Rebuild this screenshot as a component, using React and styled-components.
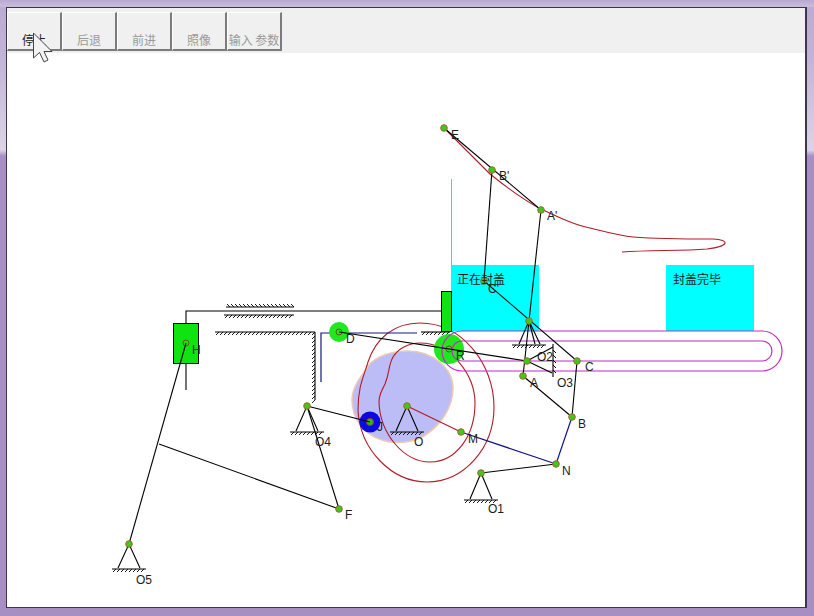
import React from 'react'
import styled, { createGlobalStyle } from 'styled-components'

const Global = createGlobalStyle`
  html, body { margin: 0; padding: 0; background: #a58fc0; }
  #root { width: 814px; height: 616px; overflow: hidden; }
`

const Frame = styled.div`
  position: relative;
  box-sizing: border-box;
  width: 814px;
  height: 616px;
  padding: 7px 7px 8px 6px;
  background: linear-gradient(to bottom, #b9a8d0 0, #c8bcdc 6px, #bcabd2 8px, #c2b4d6 60px, #dcd4e6 150px, #a78fc4 156px, #a78fc4 100%);
`

const Client = styled.div`
  box-sizing: border-box;
  display: flex;
  flex-direction: column;
  width: 100%;
  height: 100%;
  border: 1px solid #3e3650;
  border-right-width: 2px;
  background: #ffffff;
`

const Toolbar = styled.div`
  display: flex;
  flex: none;
  height: 45px;
  padding-top: 4px;
  box-sizing: border-box;
  background: #f0f0f0;
`

const ToolButton = styled.div`
  box-sizing: border-box;
  width: 55px;
  height: 39px;
  padding-bottom: 2px;
  display: flex;
  align-items: flex-end;
  justify-content: center;
  border-right: 2px solid #7b7b7b;
  border-bottom: 2px solid #7b7b7b;
  border-left: 1px solid #ffffff;
  border-top: 1px solid #ffffff;
  font-family: "Noto Sans CJK SC", "Liberation Sans", sans-serif;
  font-size: 12px;
  line-height: 14px;
  white-space: nowrap;
  color: ${props => (props.$active ? '#222222' : '#9a9a9a')};
`

const Canvas = styled.div`
  position: relative;
  flex: 1;
  background: #ffffff;
`

const Drawing = styled.svg`
  position: absolute;
  left: -7px;
  top: -53px;
  width: 814px;
  height: 616px;
`

const Label = styled.text`
  font-family: "Liberation Sans", sans-serif;
  font-size: 12px;
  fill: #1c1c1c;
`

const BoxLabel = styled.text`
  font-family: "Noto Sans CJK SC", "Liberation Sans", sans-serif;
  font-size: 12px;
  fill: #1c1c1c;
`

const Cursor = styled.svg`
  position: absolute;
  left: 32px;
  top: 31px;
  width: 22px;
  height: 33px;
`

const joints = [
  [444, 128], [492, 170], [541, 210], [484, 281], [529, 321], [527, 361],
  [523, 376], [577, 361], [572, 417], [556, 464], [481, 473], [461, 432],
  [407, 406], [307, 406], [339, 509], [129, 544],
]

const labels = [
  ['E', 451, 139], ["B'", 499, 180], ["A'", 547, 220], ['D', 346, 343], ['R', 456, 360],
  ['O2', 537, 361], ['O3', 557, 387], ['A', 530, 387], ['C', 585, 371], ['B', 578, 428],
  ['N', 562, 475], ['M', 468, 443], ['O1', 488, 513], ['O', 414, 446], ['J', 377, 431],
  ['O4', 315, 446], ['F', 345, 519], ['O5', 136, 584], ['H', 192, 354], ["C'", 488, 293],
]

// hatched ground line: a base plus short slanted ticks
const Ground = ({ x1, x2, y, up }) => {
  const ticks = []
  for (let x = x1 + 4; x <= x2; x += 4) {
    ticks.push(<line key={x} x1={x} y1={y} x2={x - 3} y2={y + (up ? -3 : 3)} />)
  }
  return (
    <g stroke="#000" strokeWidth="0.9">
      <line x1={x1} y1={y} x2={x2} y2={y} strokeWidth="1.1" />
      {ticks}
    </g>
  )
}

const Pivot = ({ x, y, drop = 26 }) => (
  <g fill="none" stroke="#000" strokeWidth="1.1">
    <polyline points={`${x - 11},${y + drop - 1} ${x},${y} ${x + 11},${y + drop - 1}`} />
    <Ground x1={x - 17} x2={x + 17} y={y + drop} />
  </g>
)

const VSlide = ({ x, y1, y2 }) => {
  const ticks = []
  for (let y = y1 + 4; y <= y2; y += 4) {
    ticks.push(<line key={y} x1={x} y1={y} x2={x - 3} y2={y + 3} />)
  }
  return (
    <g stroke="#000" strokeWidth="0.9">
      <line x1={x} y1={y1} x2={x} y2={y2} strokeWidth="1.1" />
      {ticks}
    </g>
  )
}

const Mechanism = () => (
  <Drawing viewBox="0 0 814 616">
    {/* boxes on the belt */}
    <rect x="451" y="265" width="88" height="66" fill="#00ffff" />
    <rect x="666" y="265" width="88" height="66" fill="#00ffff" />
    <rect x="451" y="179" width="1" height="86" fill="#20e4e4" />

    {/* cam disc */}
    <path
      d="M408 351 C432 351 453 368 453 388 C453 408 440 426 424 436 C414 442 396 445 382 440 C362 434 352 416 352 400 C352 386 362 376 368 366 C376 356 392 351 408 351 Z"
      fill="#bcbcf6"
      stroke="#ecc9b4"
      strokeWidth="1.5"
    />

    {/* red cam curves */}
    <g fill="none" stroke="#b01c28" strokeWidth="1.1">
      <path d="M420 323 C394 323 376 338 368 362 C364 376 358 386 358 410 C360 450 392 482 427 482 C464 482 494 448 494 407 C494 364 462 323 420 323 Z" />
      <path d="M420 343 C408 343 398 349 393 357 C388 366 390 372 385 384 C381 392 379 396 379 402 C380 434 404 462 430 462 C456 462 475 436 475 403 C475 376 452 343 420 343 Z" />
      <line x1="407" y1="406" x2="461" y2="432" />
      <path d="M444 128 L490 174 C510 190 525 201 541 209 C560 218 575 225 590 228 C610 233 620 236 633 237 C660 239 690 239 713 239 C730 240 730 246 707 249 C680 251 650 250 622 252" />
    </g>

    {/* belt */}
    <g fill="none" stroke="#c02cc0" strokeWidth="1.2">
      <path d="M462 331 H762 A20 20 0 0 1 762 371 H462" />
      <path d="M462 341 H762 A10 10 0 0 1 762 361 H462" />
    </g>

    {/* slider column */}
    <rect x="173.5" y="323.5" width="25" height="40" fill="#10e410" stroke="#000" />
    <rect x="441.5" y="291.5" width="10" height="40" fill="#10e410" stroke="#000" />
    <polyline points="186,323 186,311 441,311" fill="none" stroke="#000" strokeWidth="1.1" />
    <line x1="186" y1="363" x2="186" y2="390" stroke="#000" strokeWidth="1.1" />
    <Ground x1={226} x2={294} y={307} up />
    <Ground x1={224} x2={294} y={315} />

    {/* guides */}
    <Ground x1={215} x2={315} y={332} />
    <VSlide x={315} y1={332} y2={400} />
    <Ground x1={421} x2={450} y={332} />
    <polyline points="321,382 321,333 417,333" fill="none" stroke="#14148c" strokeWidth="1.2" />

    {/* rollers */}
    <circle cx="339" cy="332" r="10" fill="#1fe81f" />
    <circle cx="449" cy="349" r="15" fill="#1fe81f" />
    <circle cx="370" cy="422" r="10.5" fill="#0a0ae0" />
    <circle cx="370" cy="422" r="3.5" fill="#22c022" stroke="#b03030" />
    <circle cx="339" cy="332" r="3" fill="none" stroke="#705020" />
    <circle cx="449" cy="349" r="3" fill="none" stroke="#705020" />
    <circle cx="186" cy="343" r="3" fill="none" stroke="#705020" />

    {/* belt arcs run over the big roller */}
    <g fill="none" stroke="#c02cc0" strokeWidth="1.2">
      <path d="M462 331 A20 20 0 0 0 462 371" />
      <path d="M462 341 A10 10 0 0 0 462 361" />
    </g>

    {/* links */}
    <g stroke="#000" strokeWidth="1.1" fill="none">
      <line x1="339" y1="332" x2="527" y2="361" />
      <line x1="444" y1="128" x2="541" y2="210" />
      <line x1="492" y1="170" x2="484" y2="281" />
      <line x1="541" y1="210" x2="529" y2="321" />
      <line x1="484" y1="281" x2="577" y2="361" />
      <line x1="529" y1="321" x2="523" y2="376" />
      <line x1="523" y1="376" x2="572" y2="417" />
      <line x1="577" y1="361" x2="572" y2="417" />
      <line x1="481" y1="473" x2="556" y2="464" />
      <line x1="307" y1="406" x2="370" y2="422" />
      <line x1="307" y1="406" x2="339" y2="509" />
      <line x1="186" y1="343" x2="129" y2="544" />
      <line x1="159" y1="444" x2="339" y2="509" />
      <line x1="527" y1="361" x2="553" y2="347" />
      <line x1="527" y1="361" x2="552" y2="373" />
      <line x1="529" y1="321" x2="519" y2="344" />
      <line x1="529" y1="321" x2="535" y2="344" />
      <line x1="529" y1="321" x2="540" y2="344" />
    </g>
    <Ground x1={512} x2={546} y={345} />
    <g stroke="#000">
      <line x1="553" y1="344" x2="553" y2="377" strokeWidth="1.1" />
      <line x1="553" y1="350" x2="556" y2="353" />
      <line x1="553" y1="355" x2="556" y2="358" />
      <line x1="553" y1="360" x2="556" y2="363" />
      <line x1="553" y1="365" x2="556" y2="368" />
      <line x1="553" y1="370" x2="556" y2="373" />
    </g>
    <g stroke="#14148c" strokeWidth="1.2">
      <line x1="461" y1="432" x2="556" y2="464" />
      <line x1="572" y1="417" x2="556" y2="464" />
    </g>

    {/* fixed pivots */}
    <Pivot x={407} y={406} />
    <Pivot x={307} y={406} />
    <Pivot x={481} y={473} drop={27} />
    <Pivot x={129} y={544} drop={25} />

    {/* joints */}
    {joints.map(([x, y]) => (
      <circle key={`${x}-${y}`} cx={x} cy={y} r="3.3" fill="#3ec81c" stroke="#a0682a" strokeWidth="1" />
    ))}

    {/* texts */}
    {labels.map(([t, x, y]) => (
      <Label key={`${t}-${x}`} x={x} y={y}>{t}</Label>
    ))}
    <BoxLabel x="457" y="284">正在封盖</BoxLabel>
    <BoxLabel x="673" y="284">封盖完毕</BoxLabel>
  </Drawing>
)

const App = () => (
  <>
    <Global />
    <Frame>
      <Client>
        <Toolbar>
          <ToolButton $active>停止</ToolButton>
          <ToolButton>后退</ToolButton>
          <ToolButton>前进</ToolButton>
          <ToolButton>照像</ToolButton>
          <ToolButton>输入 参数</ToolButton>
        </Toolbar>
        <Canvas>
          <Mechanism />
        </Canvas>
      </Client>
      <Cursor viewBox="0 0 22 33">
        <path d="M1.5 2 V27 L7.5 21.5 L12 31 L16 29 L12 20.5 H20 Z" fill="#f2f2f2" stroke="#444" strokeWidth="1" />
      </Cursor>
    </Frame>
  </>
)

export default App
